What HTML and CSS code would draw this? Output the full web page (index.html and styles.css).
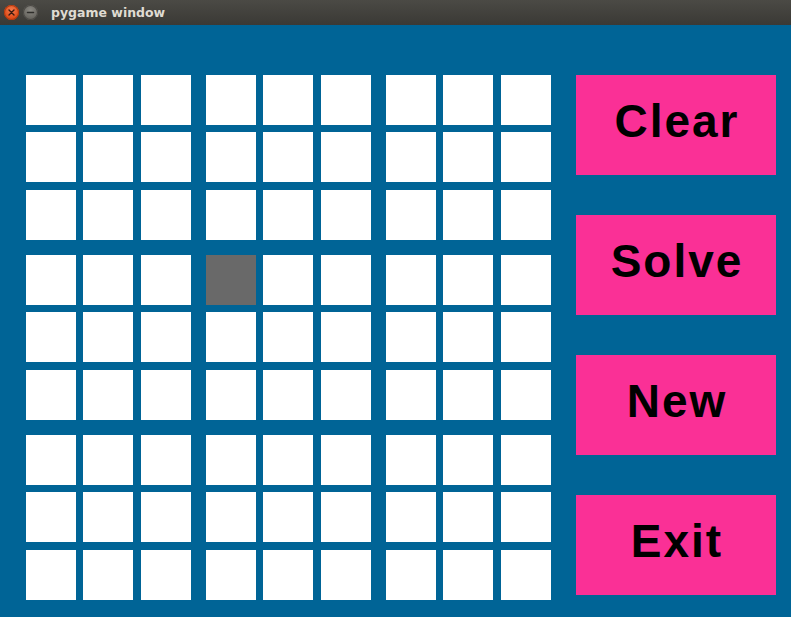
FILE: index.html
```html
<!DOCTYPE html>
<html>
<head>
<meta charset="utf-8">
<link rel="stylesheet" href="styles.css">
</head>
<body>
<div class="titlebar">
  <span class="wbtn close"><svg width="15" height="15" viewBox="0 0 15 15"><path d="M5 5 L10 10 M10 5 L5 10" stroke="#3a1a10" stroke-width="1.4" stroke-linecap="round"/></svg></span>
  <span class="wbtn min"><svg width="15" height="15" viewBox="0 0 15 15"><path d="M4.5 7.5 H10.5" stroke="#2e2d2a" stroke-width="1.5" stroke-linecap="round"/></svg></span>
  <span class="title">pygame window</span>
</div>
<div class="main">
  <div class="board">
    <div class="box"><div class="cell"></div><div class="cell"></div><div class="cell"></div><div class="cell"></div><div class="cell"></div><div class="cell"></div><div class="cell"></div><div class="cell"></div><div class="cell"></div></div>
    <div class="box"><div class="cell"></div><div class="cell"></div><div class="cell"></div><div class="cell"></div><div class="cell"></div><div class="cell"></div><div class="cell"></div><div class="cell"></div><div class="cell"></div></div>
    <div class="box"><div class="cell"></div><div class="cell"></div><div class="cell"></div><div class="cell"></div><div class="cell"></div><div class="cell"></div><div class="cell"></div><div class="cell"></div><div class="cell"></div></div>
    <div class="box"><div class="cell"></div><div class="cell"></div><div class="cell"></div><div class="cell"></div><div class="cell"></div><div class="cell"></div><div class="cell"></div><div class="cell"></div><div class="cell"></div></div>
    <div class="box"><div class="cell selected"></div><div class="cell"></div><div class="cell"></div><div class="cell"></div><div class="cell"></div><div class="cell"></div><div class="cell"></div><div class="cell"></div><div class="cell"></div></div>
    <div class="box"><div class="cell"></div><div class="cell"></div><div class="cell"></div><div class="cell"></div><div class="cell"></div><div class="cell"></div><div class="cell"></div><div class="cell"></div><div class="cell"></div></div>
    <div class="box"><div class="cell"></div><div class="cell"></div><div class="cell"></div><div class="cell"></div><div class="cell"></div><div class="cell"></div><div class="cell"></div><div class="cell"></div><div class="cell"></div></div>
    <div class="box"><div class="cell"></div><div class="cell"></div><div class="cell"></div><div class="cell"></div><div class="cell"></div><div class="cell"></div><div class="cell"></div><div class="cell"></div><div class="cell"></div></div>
    <div class="box"><div class="cell"></div><div class="cell"></div><div class="cell"></div><div class="cell"></div><div class="cell"></div><div class="cell"></div><div class="cell"></div><div class="cell"></div><div class="cell"></div></div>
  </div>
  <div class="buttons">
    <div class="btn">Clear</div>
    <div class="btn">Solve</div>
    <div class="btn">New</div>
    <div class="btn">Exit</div>
  </div>
</div>
</body>
</html>
```
FILE: styles.css
```css
html, body {
  margin: 0;
  padding: 0;
  height: 100%;
  background: #006496;
}
body {
  display: flex;
  flex-direction: column;
}
.titlebar {
  height: 25px;
  flex: none;
  background: linear-gradient(#4b4a45, #3a3935);
  display: flex;
  align-items: center;
  padding-left: 4px;
  box-sizing: border-box;
}
.wbtn {
  width: 15px;
  height: 15px;
  border-radius: 50%;
  display: block;
  margin-right: 4px;
}
.wbtn svg { display: block; }
.close {
  background: radial-gradient(circle at 50% 35%, #f47c4f, #dd4814 70%);
  box-shadow: inset 0 0 0 1px #b03a10;
}
.min {
  background: radial-gradient(circle at 50% 35%, #8c8a84, #65635d 70%);
  box-shadow: inset 0 0 0 1px #4a4844;
}
.title {
  margin-left: 9px;
  font-family: "DejaVu Sans", sans-serif;
  font-weight: bold;
  font-size: 12.5px;
  color: #dfdbd2;
}
.main {
  flex: 1;
  background: #006496;
  display: flex;
  padding: 50px 0 0 26px;
}
.board {
  display: grid;
  grid-template-columns: 165px 165px 165px;
  grid-template-rows: 165px 165px 165px;
  gap: 15px;
}
.box {
  display: grid;
  grid-template-columns: 57px 58px 50px;
  grid-template-rows: 57px 58px 50px;
}
.cell {
  width: 50px;
  height: 50px;
  background: #fff;
}
.cell.selected {
  background: #696969;
}
.buttons {
  margin-left: 25px;
  display: flex;
  flex-direction: column;
  gap: 40px;
}
.btn {
  width: 200px;
  height: 100px;
  background: #fa3096;
  display: flex;
  align-items: center;
  justify-content: center;
  font-family: "Liberation Sans", Arial, sans-serif;
  font-weight: bold;
  font-size: 46px;
  letter-spacing: 2px;
  color: #000;
  padding: 0 0 9px 2px;
  box-sizing: border-box;
}
```
